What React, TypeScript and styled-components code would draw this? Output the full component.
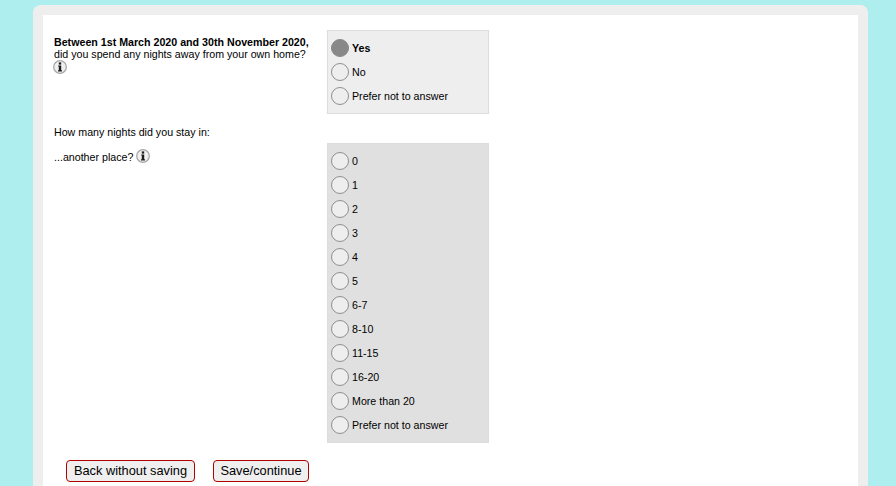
import React from 'react';
import styled, { createGlobalStyle } from 'styled-components';

const GlobalStyle = createGlobalStyle`
  html, body {
    margin: 0;
    padding: 0;
    height: 486px;
    overflow: hidden;
    background: #afeeee;
    font-family: "Liberation Sans", Arial, sans-serif;
    font-size: 10.667px;
    color: #000;
  }
`;

const Page = styled.div`
  padding: 5px 28px 0 33px;
`;

const Card = styled.main`
  border: 10px solid #eeeeee;
  border-bottom: none;
  border-radius: 8px 8px 0 0;
  background: #fff;
  height: 481px;
  box-sizing: border-box;
  padding: 15px 0 0 11px;
`;

const Question = styled.section<{ $gap?: number }>`
  display: grid;
  grid-template-columns: 273px 162px;
  margin-bottom: ${(p) => p.$gap ?? 0}px;
`;

const Label = styled.div<{ $top: number }>`
  padding-top: ${(p) => p.$top}px;
  line-height: 12px;
`;

const Heading = styled.div`
  line-height: 12px;
  margin-bottom: 5px;
`;

const Strong = styled.strong`
  display: block;
  font-weight: bold;
`;

const InfoWrap = styled.span<{ $lift?: number; $left?: number }>`
  display: inline-block;
  width: 14px;
  height: 14px;
  vertical-align: top;
  margin-top: ${(p) => -(p.$lift ?? 0)}px;
  margin-left: ${(p) => p.$left ?? 0}px;
`;

const Options = styled.div<{ $shade: string }>`
  box-sizing: border-box;
  border: 1px solid #dddddd;
  background: ${(p) => p.$shade};
  padding: 5px 3px;
`;

const Option = styled.label`
  display: flex;
  align-items: center;
  gap: 3px;
  height: 24px;
`;

const Radio = styled.span<{ $checked?: boolean }>`
  box-sizing: border-box;
  width: 18px;
  height: 18px;
  border-radius: 50%;
  border: 1px solid ${(p) => (p.$checked ? '#888888' : '#8f8f8f')};
  background: ${(p) => (p.$checked ? '#888888' : '#eeeeee')};
  flex: none;
`;

const OptionText = styled.span<{ $checked?: boolean }>`
  font-weight: ${(p) => (p.$checked ? 'bold' : 'normal')};
`;

const Actions = styled.div`
  display: flex;
  gap: 18px;
  padding: 17px 0 0 12px;
`;

const Button = styled.button<{ $width: number }>`
  box-sizing: border-box;
  width: ${(p) => p.$width}px;
  height: 22px;
  padding: 0 0 2px;
  border: 1px solid #b00000;
  border-radius: 4px;
  background: #efefef;
  font-family: "Liberation Sans", Arial, sans-serif;
  font-size: 12.8px;
  color: #000;
`;

const InfoIcon = () => (
  <svg width="14" height="14" viewBox="0 0 14 14">
    <circle cx="7" cy="7" r="6.3" fill="#f0f0f0" stroke="#a8a8a8" strokeWidth="1.3" />
    <rect x="5.8" y="2.4" width="2.4" height="2.2" fill="#1c1c1c" />
    <path d="M5.2 5.4H8.2V10.3H9V11.6H5V10.3H5.8V6.6H5.2Z" fill="#1c1c1c" />
  </svg>
);

const nights = ['0', '1', '2', '3', '4', '5', '6-7', '8-10', '11-15', '16-20', 'More than 20', 'Prefer not to answer'];

const RadioRow = ({ text, checked }: { text: string; checked?: boolean }) => (
  <Option>
    <Radio $checked={checked} />
    <OptionText $checked={checked}>{text}</OptionText>
  </Option>
);

const App = () => (
  <Page>
    <GlobalStyle />
    <Card>
      <Question $gap={12}>
        <Label $top={6}>
          <Strong>Between 1st March 2020 and 30th November 2020,</Strong>
          did you spend any nights away from your own home?
          <br />
          <InfoWrap $left={-1}>
            <InfoIcon />
          </InfoWrap>
        </Label>
        <Options $shade="#eeeeee">
          <RadioRow text="Yes" checked />
          <RadioRow text="No" />
          <RadioRow text="Prefer not to answer" />
        </Options>
      </Question>
      <Heading>How many nights did you stay in:</Heading>
      <Question>
        <Label $top={8}>
          ...another place?{' '}
          <InfoWrap $lift={2}>
            <InfoIcon />
          </InfoWrap>
        </Label>
        <Options $shade="#e0e0e0">
          {nights.map((n) => (
            <RadioRow key={n} text={n} />
          ))}
        </Options>
      </Question>
      <Actions>
        <Button $width={129}>Back without saving</Button>
        <Button $width={96}>Save/continue</Button>
      </Actions>
    </Card>
  </Page>
);

export default App;
